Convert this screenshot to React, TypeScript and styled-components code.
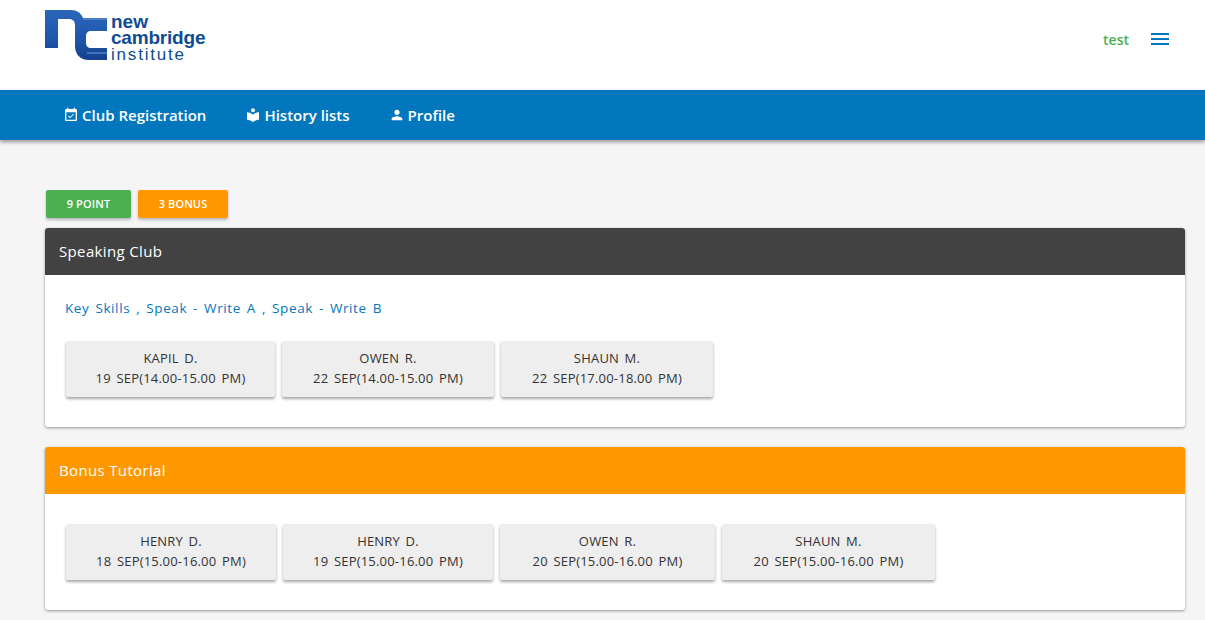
import React from 'react'
import styled, { createGlobalStyle } from 'styled-components'

const clubSessions = [
    { name: 'KAPIL D.', time: '19 SEP(14.00-15.00 PM)', width: 209 },
    { name: 'OWEN R.', time: '22 SEP(14.00-15.00 PM)', width: 212 },
    { name: 'SHAUN M.', time: '22 SEP(17.00-18.00 PM)', width: 212 },
]

const bonusSessions = [
    { name: 'HENRY D.', time: '18 SEP(15.00-16.00 PM)', width: 210 },
    { name: 'HENRY D.', time: '19 SEP(15.00-16.00 PM)', width: 210 },
    { name: 'OWEN R.', time: '20 SEP(15.00-16.00 PM)', width: 215 },
    { name: 'SHAUN M.', time: '20 SEP(15.00-16.00 PM)', width: 213 },
]

const Icon: React.FC<{ d: string, size?: number }> = ({ d, size = 16 }) => (
    <svg width={size} height={size} viewBox="0 0 24 24" fill="currentColor">
        <path d={d} />
    </svg>
)

const Logo = () => (
    <svg width="165" height="60" viewBox="0 0 165 60">
        <defs>
            <linearGradient id="mark" x1="0" y1="0" x2="0" y2="1">
                <stop offset="0" stopColor="#2a66ba" />
                <stop offset="0.55" stopColor="#1f58ab" />
                <stop offset="1" stopColor="#143f8e" />
            </linearGradient>
        </defs>
        <path
            fill="url(#mark)"
            d="M0 4H26C32 4 36 7 38 12H62V25H46C43 25 41 27 41 30V37C41 40 43 42 46 42H62V54H44C35 54 30 48 30 40V20C30 15 28 13 24 13H13V42H0Z"
        />
        <path fill="none" stroke="#6f9bd8" strokeWidth="1" d="M38 13H62M42 47H62" />
        <text x="66" y="22" fontFamily="'Liberation Sans', sans-serif" fontWeight="700" fontSize="19" fill="#0f4c92">new</text>
        <text x="66" y="38" fontFamily="'Liberation Sans', sans-serif" fontWeight="700" fontSize="19" letterSpacing="-0.2" fill="#0f4c92">cambridge</text>
        <text x="66" y="54" fontFamily="'Liberation Sans', sans-serif" fontSize="17" letterSpacing="1.8" fill="#0f4c92">institute</text>
    </svg>
)

const App = () => (
    <>
        <GlobalStyle />
        <Header>
            <Logo />
            <UserArea>
                <UserName>test</UserName>
                <MenuButton>
                    <Icon size={24} d="M3 18h18v-2H3v2zm0-5h18v-2H3v2zm0-7v2h18V6H3z" />
                </MenuButton>
            </UserArea>
        </Header>
        <NavBar>
            <NavLink>
                <Icon d="M16.53 11.06L15.47 10l-4.88 4.88-2.12-2.12-1.06 1.06L10.59 17l5.94-5.94zM19 3h-1V1h-2v2H8V1H6v2H5c-1.11 0-1.99.9-1.99 2L3 19c0 1.1.89 2 2 2h14c1.1 0 2-.9 2-2V5c0-1.1-.9-2-2-2zm0 16H5V8h14v11z" />
                Club Registration
            </NavLink>
            <NavLink>
                <Icon d="M12 11.55C9.64 9.35 6.48 8 3 8v11c3.48 0 6.64 1.35 9 3.55 2.36-2.19 5.52-3.55 9-3.55V8c-3.48 0-6.64 1.35-9 3.55zM12 8c1.66 0 3-1.34 3-3s-1.34-3-3-3-3 1.34-3 3 1.34 3 3 3z" />
                History lists
            </NavLink>
            <NavLink>
                <Icon d="M12 12c2.21 0 4-1.79 4-4s-1.79-4-4-4-4 1.79-4 4 1.79 4 4 4zm0 2c-2.67 0-8 1.34-8 4v2h16v-2c0-2.66-5.33-4-8-4z" />
                Profile
            </NavLink>
        </NavBar>
        <Main>
            <Badges>
                <Badge $color="#4caf50" $width={85}>9 POINT</Badge>
                <Badge $color="#ff9800" $width={90}>3 BONUS</Badge>
            </Badges>
            <Card>
                <CardTitle $color="#424242">Speaking Club</CardTitle>
                <CardBody>
                    <Courses>Key Skills , Speak - Write A , Speak - Write B</Courses>
                    <Sessions>
                        {clubSessions.map((s) => (
                            <Session key={s.time} $width={s.width}>{s.name}<br />{s.time}</Session>
                        ))}
                    </Sessions>
                </CardBody>
            </Card>
            <Card>
                <CardTitle $color="#ff9800">Bonus Tutorial</CardTitle>
                <CardBody>
                    <Sessions>
                        {bonusSessions.map((s) => (
                            <Session key={s.time + s.name} $width={s.width}>{s.name}<br />{s.time}</Session>
                        ))}
                    </Sessions>
                </CardBody>
            </Card>
        </Main>
    </>
)

export default App

const GlobalStyle = createGlobalStyle`
    html, body {
        margin: 0;
        height: 620px;
        overflow: hidden;
        background: #f5f5f5;
        font-family: 'Open Sans', 'Noto Sans', sans-serif;
    }
`

const Header = styled.header`
    height: 90px;
    background: #fff;
    display: flex;
    justify-content: space-between;
    padding: 6px 33px 0 45px;
    box-sizing: border-box;
`

const UserArea = styled.div`
    display: flex;
    align-items: center;
    gap: 19px;
    height: 66px;
`

const UserName = styled.span`
    color: #4caf50;
    font-size: 14px;
    font-weight: 600;
`

const MenuButton = styled.span`
    display: flex;
    color: #0277bd;
`

const NavBar = styled.nav`
    height: 50px;
    background: #0277bd;
    display: flex;
    align-items: center;
    gap: 39px;
    padding-left: 63px;
    box-shadow: 0 2px 4px rgba(0, 0, 0, 0.4);
`

const NavLink = styled.a`
    display: flex;
    align-items: center;
    gap: 3px;
    color: #fff;
    font-size: 15px;
    font-weight: 600;
`

const Main = styled.main`
    padding: 50px 20px 0 45px;
`

const Badges = styled.div`
    display: flex;
    gap: 7px;
    margin: 0 0 10px 1px;
`

const Badge = styled.div<{ $color: string, $width: number }>`
    width: ${(p) => p.$width}px;
    height: 28px;
    line-height: 28px;
    text-align: center;
    background: ${(p) => p.$color};
    color: #fff;
    font-size: 11px;
    font-weight: 600;
    letter-spacing: 0.1px;
    border-radius: 2px;
    box-shadow: 0 2px 3px rgba(0, 0, 0, 0.25);
`

const Card = styled.section`
    background: #fff;
    border-radius: 3px;
    overflow: hidden;
    margin-bottom: 20px;
    box-shadow: 0 1px 3px rgba(0, 0, 0, 0.4);
`

const CardTitle = styled.div<{ $color: string }>`
    height: 47px;
    line-height: 47px;
    padding-left: 14px;
    background: ${(p) => p.$color};
    color: #fff;
    font-size: 15px;
    letter-spacing: 0.35px;
`

const CardBody = styled.div`
    padding: 30px 20px;
`

const Courses = styled.div`
    color: #0277bd;
    font-size: 13.5px;
    line-height: 18px;
    letter-spacing: 0.6px;
    word-spacing: 1.9px;
    margin-bottom: 24px;
    margin-top: -6px;
`

const Sessions = styled.div`
    display: flex;
    gap: 7px;
    margin-left: 1px;
`

const Session = styled.div<{ $width: number }>`
    width: ${(p) => p.$width}px;
    height: 56px;
    box-sizing: border-box;
    padding-top: 7px;
    background: #eee;
    color: #333;
    font-size: 13px;
    line-height: 20px;
    letter-spacing: 0.2px;
    word-spacing: 2px;
    text-align: center;
    border-radius: 2px;
    box-shadow: 0 2px 3px rgba(0, 0, 0, 0.35);
`
